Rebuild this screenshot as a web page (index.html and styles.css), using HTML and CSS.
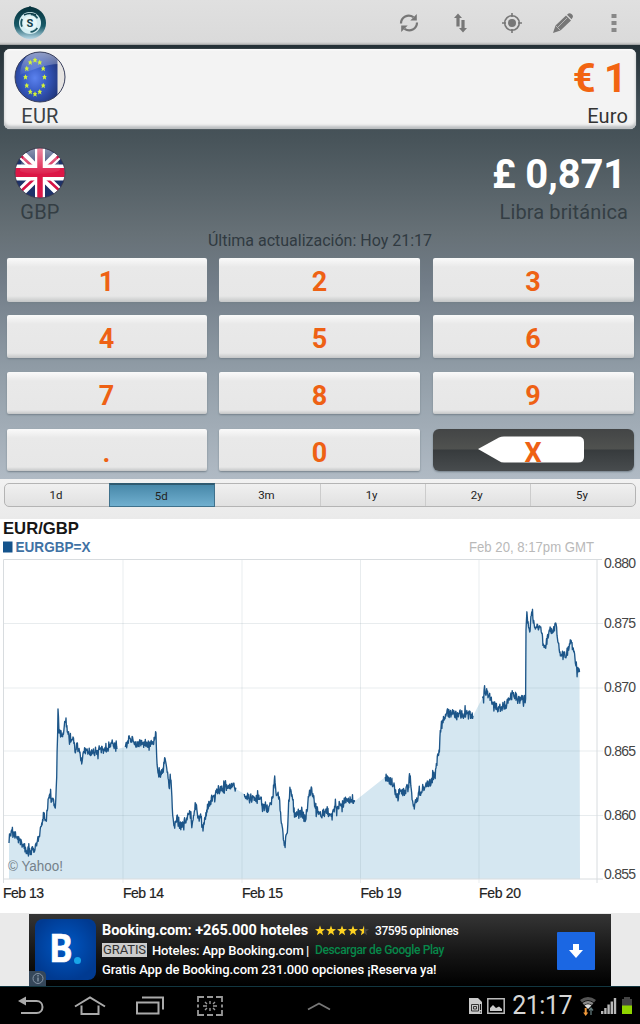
FILE: index.html
```html
<!DOCTYPE html>
<html lang="es">
<head>
<meta charset="utf-8">
<title>EUR/GBP</title>
<link rel="stylesheet" href="styles.css">
</head>
<body>
<header class="topbar">
  <svg class="logo" width="34" height="36" viewBox="0 0 34 36">
    <defs><linearGradient id="ring" x1="0" y1="0" x2="0" y2="1"><stop offset="0" stop-color="#06323c"/><stop offset=".6" stop-color="#185a68"/><stop offset="1" stop-color="#b8d8e6"/></linearGradient></defs>
    <circle cx="17" cy="18" r="16" fill="url(#ring)"/>
    <path d="M14 3l3-2 3 2z" fill="#06323c"/>
    <circle cx="17" cy="18" r="11" fill="#d5eef2"/>
    <circle cx="17" cy="18" r="8.8" fill="none" stroke="#1c5561" stroke-width="1.800" stroke-dasharray="8 10.430" stroke-dashoffset="-5.200"/>
    <path d="M11 10q6-3 12 0" fill="none" stroke="#0d3e49" stroke-width="1.5"/>
    <circle cx="17" cy="18" r="7" fill="#e8f7f8"/>
    <text x="17" y="22" text-anchor="middle" class="logo-s">S</text>
  </svg>
  <nav class="actions">
    <svg width="24" height="24" viewBox="0 0 24 24" fill="none" stroke="#777" stroke-width="2.2"><path d="M4 12.500C4 6 11 2.500 16.500 6.200M20 11.500C20 18 13 21.500 7.500 17.800"/><path d="M19.800 3v6.500h-6.500zM4.200 21v-6.500h6.500z" fill="#777" stroke="none"/></svg>
    <svg width="24" height="24" viewBox="0 0 24 24" fill="#777"><path d="M10 2.500l4 4.500h-2.400v8.500H8.400V7H6zM15 21.500l-4-4.500h2.400V9h3.200v8H19z"/></svg>
    <svg width="24" height="24" viewBox="0 0 24 24" fill="none" stroke="#777" stroke-width="1.600"><circle cx="12" cy="12" r="7.300"/><circle cx="12" cy="12" r="4" fill="#777" stroke="none"/><path d="M12 2v4M12 18v4M2 12h4M18 12h4"/></svg>
    <svg width="24" height="24" viewBox="0 0 24 24" fill="#777"><path d="M2 22l2.500-7.500L15 4.500l5 5L9.500 19.500z"/><path d="M16 3.800l1.500-1.300q1.500-.8 3 .5l1 1q1 1.300 0 2.800L20.500 8.300z"/><path d="M7 16l9-9M4.500 14.500l5 5" stroke="#ddd" stroke-width=".6"/></svg>
    <svg width="24" height="24" viewBox="0 0 24 24" fill="#888"><path d="M9.500 3h5v4h-5zM9.500 10h5v4h-5zM9.500 17h5v4h-5z"/></svg>
  </nav>
</header>

<main class="converter">
  <section class="currency card">
    <div class="side">
      <svg class="flag" width="52" height="52" viewBox="0 0 52 52">
        <defs>
          <radialGradient id="blue" cx=".48" cy=".52" r=".58"><stop offset="0" stop-color="#5b82ee"/><stop offset=".5" stop-color="#3558c0"/><stop offset="1" stop-color="#22387f"/></radialGradient>
          <linearGradient id="gloss" x1="0" y1="0" x2="0" y2="1"><stop offset="0" stop-color="#fff" stop-opacity=".5"/><stop offset="1" stop-color="#fff" stop-opacity=".04"/></linearGradient>
          <clipPath id="disc"><circle cx="26" cy="26" r="25"/></clipPath>
        </defs>
        <g clip-path="url(#disc)">
          <path d="M0 0h52v52H0z" fill="#e6e4e2"/><path d="M0 0h43.500v52H0z" fill="url(#blue)"/>
          <path d="M6 24C7 8 14 1 26 1s17 4 19 12C32 13 20 18 6 24z" fill="url(#gloss)"/>
          <g id="stars" fill="#d2f23a"></g>
        </g>
        <circle cx="26" cy="26" r="25" fill="none" stroke="#383f5d" stroke-width="1"/>
      </svg>
      <span class="code">EUR</span>
    </div>
    <div class="value"><strong class="amount orange">€ 1</strong><span class="name">Euro</span></div>
  </section>
  <section class="currency plain">
    <div class="side">
      <svg class="flag" width="52" height="52" viewBox="0 0 52 52">
        <g clip-path="url(#disc)">
          <path d="M0 0h52v52H0z" fill="#1e3268"/>
          <path d="M5 5l42 42M47 5L5 47" stroke="#fff" stroke-width="9"/>
          <path d="M5 7l14 13M47 7L33 20M20 32L5 46M33 32l14 13" stroke="#d31245" stroke-width="2.500"/>
          <path d="M26 0v52" stroke="#fff" stroke-width="10"/><path d="M0 25.500h52" stroke="#fff" stroke-width="16"/>
          <path d="M26 0v52" stroke="#dc1746" stroke-width="5.500"/>
          <path d="M0 25.500h52" stroke="#dc1746" stroke-width="9"/>
          <path d="M6 24C7 8 14 1 26 1s19 8 20 22C38 28 14 28 6 24z" fill="url(#gloss)"/>
        </g>
        <circle cx="26" cy="26" r="25" fill="none" stroke="#3b3949" stroke-width=".8"/>
      </svg>
      <span class="code">GBP</span>
    </div>
    <div class="value"><strong class="amount">£ 0,871</strong><span class="name">Libra británica</span></div>
  </section>
  <p class="updated">Última actualización: Hoy 21:17</p>
  <div class="keypad">
    <button class="key">1</button><button class="key">2</button><button class="key">3</button>
    <button class="key">4</button><button class="key">5</button><button class="key">6</button>
    <button class="key">7</button><button class="key">8</button><button class="key">9</button>
    <button class="key">.</button><button class="key">0</button>
    <button class="key delete"><svg class="back" width="108" height="28" viewBox="0 0 108 28"><path d="M1 13L22 1.500Q24 .5 27 .5H101Q107 .5 107 6V21Q107 26.500 101 26.500H27Q24 26.500 22 25z" fill="#fff"/></svg><span class="x">X</span></button>
  </div>
</main>

<div class="ranges">
  <div class="tabs"><span class="tab">1d</span><span class="tab active">5d</span><span class="tab">3m</span><span class="tab">1y</span><span class="tab">2y</span><span class="tab">5y</span></div>
</div>

<svg class="chart" width="640" height="394" viewBox="0 519 640 394">
  <text x="3" y="534" class="title" textLength="76" lengthAdjust="spacingAndGlyphs">EUR/GBP</text>
  <path d="M3 541.500h9.500v11H3z" fill="#14538c"/>
  <text x="15.500" y="552" class="series" textLength="75" lengthAdjust="spacingAndGlyphs">EURGBP=X</text>
  <text x="469" y="552" class="stamp" textLength="125" lengthAdjust="spacingAndGlyphs">Feb 20, 8:17pm GMT</text>
  <path id="area" fill="#d5e7f1"/>
  <path class="grid" d="M3 623.500h600M3 688h600M3 751h600M3 815.500h600M123 560v323M242 560v323M360.500 560v323M479 560v323"/>
  <path class="frame" d="M3.500 883V559.500H602M597 560v323M3 879h600"/>
  <path id="line" class="line"/>
  <text x="8" y="871" class="credit" textLength="55" lengthAdjust="spacingAndGlyphs">© Yahoo!</text>
  <g class="axis">
    <text x="604" y="568" textLength="32">0.880</text><text x="604" y="628" textLength="32">0.875</text><text x="604" y="692" textLength="32">0.870</text><text x="604" y="756" textLength="32">0.865</text><text x="604" y="820" textLength="32">0.860</text><text x="604" y="879" textLength="32">0.855</text>
  </g>
  <g class="days">
    <text x="3" y="898" textLength="41">Feb 13</text><text x="123" y="898" textLength="41">Feb 14</text><text x="242" y="898" textLength="41">Feb 15</text><text x="360.500" y="898" textLength="41">Feb 19</text><text x="479" y="898" textLength="42">Feb 20</text>
  </g>
</svg>

<div class="ad-strip">
  <section class="ad">
    <div class="ad-logo">
      <span class="b">B</span><i class="dot"></i>
      <svg class="info" width="17" height="15" viewBox="0 0 17 15"><path d="M0 0h12q5 0 5 5v10H0z" fill="#35475a"/><circle cx="9" cy="7.500" r="5" fill="none" stroke="#8695a6"/><path d="M9 6.500v4M9 4v1.500" stroke="#8695a6" stroke-width="1.400"/></svg>
    </div>
    <div class="ad-copy">
      <div class="row"><b class="headline">Booking.com: +265.000 hoteles</b>
        <svg class="rating" width="56" height="12" viewBox="0 0 56 12"><defs><path id="star" d="M5 .5l1.300 3.600 3.700.1-2.900 2.300 1 3.700L5 8.100l-3.100 2.100 1-3.700L0 4.200l3.700-.1z"/><clipPath id="half"><path d="M0 0h5v12H0z"/></clipPath></defs><g fill="#ffd321"><use href="#star"/><use href="#star" x="11"/><use href="#star" x="22"/><use href="#star" x="33"/></g><use href="#star" x="44" fill="#4b4b45"/><g transform="translate(44)"><use href="#star" clip-path="url(#half)" fill="#ffd321"/></g></svg>
        <span class="reviews">37595 opiniones</span></div>
      <div class="row"><span class="free">GRATIS</span><span class="app">Hoteles: App Booking.com</span><span class="bar">|</span><span class="store">Descargar de Google Play</span></div>
      <div class="row last">Gratis App de Booking.com 231.000 opciones ¡Reserva ya!</div>
    </div>
    <div class="download"><svg width="14" height="14" viewBox="0 0 14 14"><path d="M4 0h6v6h4l-7 8-7-8h4z" fill="#fff"/></svg></div>
  </section>
</div>

<footer class="system">
  <div class="soft">
    <svg width="26" height="20" viewBox="0 0 26 20" fill="none" stroke="#aaa" stroke-width="2"><path d="M5 5h13.500c8 0 8 12 0 12H3"/><path d="M0 5l8-4.500v9z" fill="#aaa" stroke="none"/></svg>
    <svg width="32" height="20" viewBox="0 0 32 20" fill="none" stroke="#aaa" stroke-width="2"><path d="M1 10.500L16 1.500l15 9M7.500 9.500V18h17V9.500"/></svg>
    <svg width="28" height="20" viewBox="0 0 28 20" fill="none" stroke="#aaa" stroke-width="2"><path d="M1 6.500h21.500v11H1zM6 1.500h21v12"/></svg>
    <svg width="26" height="20" viewBox="0 0 26 20" fill="none" stroke="#999" stroke-width="1.800"><path d="M7 1H1v5M10 1h6M19 1h6v5M1 8.500v3M25 8.500v3M1 14v5h6M10 19h6M19 19h6v-5"/><path d="M13 5v3M13 12v3M6 10h4M16 10h4M8 6l2 2M18 6l-2 2M8 14l2-2M18 14l-2-2" stroke-width="1.400"/></svg>
    <svg class="caret" width="26" height="12" viewBox="0 0 26 12" fill="none" stroke="#777" stroke-width="1.800"><path d="M2 9.500l11-6 11 6"/></svg>
  </div>
  <div class="status">
    <svg width="14" height="16" viewBox="0 0 14 16"><path d="M0 0h9l4 4v12H0z" fill="#c9c9c9"/><path d="M2.500 6.500h7v6.500h-7zM4.500 8.500h3v2.500h-3z" fill="none" stroke="#333"/><path d="M11.500 6v6M11.500 13.500v1" stroke="#111" stroke-width="1.200"/></svg>
    <svg width="18" height="16" viewBox="0 0 18 16"><path d="M.8.800h16.400v14.400H.8z" fill="none" stroke="#bbb" stroke-width="1.500"/><path d="M3 13v-3l3-3 3 3 3-1.500 3 2.500v2z" fill="#ccc"/></svg>
    <span class="clock">21:17</span>
    <svg class="wifi" width="18" height="20" viewBox="0 0 18 20"><path d="M1 4q8-6 16 0l-2 2.500Q9 2 3 6.500z" fill="#555"/><path d="M3.500 7q5.500-4 11 0l-1.500 2Q9 6 5 9z" fill="#888"/><path d="M5.500 9.500q3.500-2.500 7 0L9 13z" fill="#ddd"/><path d="M5.700 12h2v4.500h1.500L6.700 20 4.200 16.500h1.500z" fill="#f39a3a"/><path d="M12 19v-6M10 14.500l2-2.500 2 2.500" fill="none" stroke="#607779" stroke-width="1.300"/></svg>
    <svg width="16" height="17" viewBox="0 0 16 17" fill="#b8b8b8"><path d="M0 14h2.400v3H0zM3.200 11h2.400v6H3.200zM6.400 7.500h2.400V17H6.400zM9.600 4.500H12V17H9.600zM12.800 1h2.400v16h-2.400z"/></svg>
    <svg width="12" height="17" viewBox="0 0 12 17"><path d="M3 0h6v2h2v15H1V2h2z" fill="#444"/><path d="M1 8.500h10V17H1z" fill="#8fd400"/></svg>
  </div>
</footer>
<script src="chart.js"></script>
</body>
</html>
```

FILE: styles.css
```css
* { box-sizing: border-box; }
body { margin: 0; width: 640px; height: 1024px; overflow: hidden; background: #eee; font-family: Roboto, "Noto Sans", sans-serif; color: #333; display: flex; flex-direction: column; }
svg { display: block; flex: none; }

.topbar { height: 45px; flex: none; display: flex; align-items: center; justify-content: space-between; padding: 0 14px 0 13px; background: linear-gradient(#e0e0e0, #dadada 42px, #bdbdbd 44px, #8e9293 45px); }
.logo-s { font: bold 11px Roboto, sans-serif; fill: #123e48; }
.actions { display: flex; gap: 27.200px; }

.converter { height: 434px; flex: none; display: flex; flex-direction: column; background: linear-gradient(#253137 0, #3d4a51 55px, #48545a 95px, #677177 190px, #717c87 235px, #929ea8 330px, #b0bac4 434px); }
.currency { display: flex; justify-content: space-between; flex: none; }
.card { height: 80px; margin: 4px 4px 0; padding: 2px 8px 0 9px; border-radius: 6px; background: #f3f3f3; box-shadow: inset 0 -3px 3px #b9bcbe, inset 0 1px 2px #fff, 0 0 1px #c5cacd; }
.plain { height: 98px; padding: 18px 12px 0 13px; }
.side { display: flex; flex-direction: column; align-items: center; width: 54px; }
.code, .name { font-size: 20px; line-height: 24px; }
.code { margin-top: 1px; color: #3b4145; letter-spacing: .2px; }
.plain .code, .plain .name { color: #343e44; }
.value { display: flex; flex-direction: column; align-items: flex-end; }
.amount { font-size: 40px; line-height: 48px; height: 53px; padding: 4px 2px 0 0; color: #fff; letter-spacing: -.2px; }
.orange { color: #f26411; letter-spacing: -.9px; }
.name { letter-spacing: .12px; }
.updated { margin: 0; height: 31px; flex: none; text-align: center; font-size: 16px; line-height: 28px; color: #303a41; }

.keypad { display: grid; grid-template-columns: 200px 201px 201px; grid-auto-rows: 44px; column-gap: 12.500px; row-gap: 13px; padding: 0 6px 0 6.500px; }
.key { position: relative; height: 44px; border: 0; padding: 3px 0 0; font: 700 27px/40px Roboto, sans-serif; color: #ee6114; border-radius: 2px; background: linear-gradient(#fafafa, #e9e9e9 9px, #e7e7e7 38px, #c4c6c7); box-shadow: 0 1px 2px #74808a; }
.key:nth-child(n+4) { height: 43px; padding-top: 4px; }
.key:nth-child(n+7) { height: 42px; padding-top: 4px; }
.key.delete { border-radius: 6px; background: linear-gradient(#434546, #505250 20px, #373b3d 21px, #484c4e); }
.back { position: absolute; left: 44px; top: 7px; }
.x { position: relative; }

.ranges { height: 40px; flex: none; padding: 4px 4px 0; background: linear-gradient(#f2f2f2, #eaeaea); }
.tabs { display: flex; height: 24px; border: 1px solid #b4b4b4; border-radius: 5px; background: linear-gradient(#f0f0f0, #e1e1e1); }
.tab { flex: 1; text-align: center; font-size: 11.500px; line-height: 23px; color: #222; padding-right: 2px; }
.tab + .tab { border-left: 1px solid #ccc; }
.tab.active { margin: -1px 0; line-height: 22px; border: 1px solid #3f718c; border-top: 2px solid #2f5a70; background: linear-gradient(#4888a9, #70afcf); }
.tab.active + .tab { border-left: 0; }

.chart { background: #fff; font-family: "Liberation Sans", Arial, sans-serif; }
.title { font-size: 16.500px; font-weight: 700; fill: #161616; }
.series { font-size: 14.500px; font-weight: 700; fill: #3f72a4; }
.stamp { font-size: 14.500px; fill: #b9b9b9; }
.grid { fill: none; stroke: #78909c; stroke-opacity: .17; }
.frame { fill: none; stroke: #d8dcdf; }
.line { fill: none; stroke: #1d5689; stroke-width: 1.350; stroke-linejoin: round; }
.credit { font-size: 14px; fill: #74818a; }
.axis { font-size: 14px; fill: #444; }
.days { font-size: 14px; fill: #222; stroke: #222; stroke-width: .2; }

.ad-strip { height: 73px; flex: none; padding: 1px 29px 0; background: #eaeaea; }
.ad { height: 72px; display: flex; background: linear-gradient(#353535, #151515 40px, #000); color: #fff; }
.ad-logo { position: relative; width: 61px; height: 61px; margin: 5px 0 0 6px; border-radius: 8px; background: radial-gradient(circle at 50% 45%, #0058c4, #003a91 75%); display: flex; padding: 7px 0 0 15px; }
.b { font: 700 39px/46px Roboto, sans-serif; width: 23px; transform: scaleX(.9); transform-origin: left; -webkit-text-stroke: .7px #fff; }
.dot { width: 7px; height: 7px; margin: 31px 0 0 1px; border-radius: 50%; background: #18a5e8; }
.info { position: absolute; left: -6px; bottom: -6px; }
.ad-copy { padding: 7px 0 0 6px; width: 420px; white-space: nowrap; }
.row { display: flex; align-items: center; height: 19.500px; font-size: 13px; font-weight: 500; letter-spacing: -.1px; }
.headline { width: 206px; font-size: 14.500px; font-weight: 700; letter-spacing: -.05px; }
.rating { margin: 0 4px 0 7px; }
.reviews { font-size: 12px; letter-spacing: -.42px; }
.free { background: #ccc; color: #333; font-size: 13px; line-height: 14px; width: 45px; text-align: center; font-weight: 400; }
.app { margin-left: 5px; width: 151px; letter-spacing: -.12px; }
.bar { width: 12px; padding-left: 3px; }
.store { color: #07884a; font-size: 12px; letter-spacing: -.37px; }
.last { letter-spacing: -.09px; }
.download { width: 38px; height: 38px; margin: 18px 0 0 41px; background: #1b67e3; display: flex; align-items: center; justify-content: center; border-radius: 1px; }

.system { height: 38px; flex: none; border-top: 1px solid #123640; background: #000; display: flex; justify-content: space-between; padding: 0 7px 0 18px; }
.soft { display: flex; align-items: center; }
.soft svg { margin-right: 30px; }
.soft svg:nth-child(4) { margin: 0 83px 0 3px; }
.soft .caret { margin-right: 0; }
.status { display: flex; align-items: center; gap: 4px; }
.status svg:nth-child(-n+2) { position: relative; left: 4px; }
.clock { font-size: 25px; color: #d6d6d6; margin: 0 3px 0 7px; letter-spacing: -.5px; }
```

FILE: chart.js
```javascript
// Trading sessions as x,y pairs in chart coordinates.
const sessions = [
  [9,843,10,834,12,832,16.700,837,21.700,843,26.700,851,33,850,37,843,41.700,823,44.300,813,46,820,49,797,52.700,799,55.300,808,56.700,777,58,709,59,733,63,733,66,718,67.300,732,71.700,740,73.500,738,75,752,77,745,80,752,81.700,764,83.300,752,93,752,106.700,748,113,743,117,749],
  [125.300,747,130,738,135,743,147,743,152,742,154.500,740,156,733,156.700,757,158,773,162.500,773,165,758,166.700,768,169,787,171,780,172.300,808,174.300,826,177.300,815,180,827,186.700,818,190,813,192.700,821,196,804,198.300,816,201,818,203,831,206.700,810,213,797,218,792,223,790,232.700,785,236,789],
  [244.300,794,250,800,258,797,265,806,268,809,272.700,798,274.700,776,276,793,279.300,797,281,820,283,833,284.700,845,287.300,833,288.700,800,290.300,791,292.700,800,295,817,300,812,303,816,306,819,308.700,797,311.700,788,315,807,320.700,816,326,809,330,814,335,807,341.700,804,348,799,355,801],
  [385.300,777,389,781,394,783,396,796,400,790,404,793,408.300,788,410.300,776,411.700,793,414.300,809,416.700,798,421,792,426,783,431,784,436,768,439,750,440.700,732,442.700,720,446.700,713,453,714,463,714,473,716],
  [482.300,698,485,692,489.300,695,491.700,703,497.300,708,506.700,705,513,693,517.300,699,525.600,699,526,630,527.300,617,529.700,632,531.700,612,533.300,623,538,628,540,627,543.300,644,545.300,648,549.300,630,553.300,632,555.700,623,558.300,643,561.300,656,566.700,653,570.700,643,573.300,648,576.700,668,579.500,672]
];
let seed = 71;
const noise = () => { seed = (seed * 16807) % 2147483647; return seed / 2147483647 - 0.5; };
const strokes = [];
const outline = [];
for (const s of sessions) {
  const points = [];
  for (let i = 0; i < s.length - 2; i += 2) {
    const dx = s[i + 2] - s[i], dy = s[i + 3] - s[i + 1];
    const count = Math.max(1, Math.round(dx / 0.42));
    for (let k = 0; k < count; k++) {
      const t = k / count, swing = k ? noise() * (noise() > 0.36 ? 19 : 9) : 0;
      points.push((s[i] + dx * t).toFixed(1) + ' ' + (s[i + 1] + dy * t + swing).toFixed(1));
    }
  }
  points.push(s[s.length - 2] + ' ' + s[s.length - 1]);
  strokes.push('M' + points.join('L'));
  outline.push(...points);
}
document.getElementById('line').setAttribute('d', strokes.join(''));
document.getElementById('area').setAttribute('d', 'M9 879L' + outline.join('L') + 'L580 879Z');

const ns = 'http://www.w3.org/2000/svg';
for (let i = 0; i < 12; i++) {
  const a = i * Math.PI / 6;
  const star = document.createElementNS(ns, 'path');
  star.setAttribute('d', 'M0-2.800L.8-.9 2.300-.8 1.200.6 1.700 2.800 0 1.500-1.700 2.800-1.200.6-2.300-.8-.8-.9z');
  star.setAttribute('transform', `translate(${21 + 9.500 * Math.sin(a)} ${26 - 17 * Math.cos(a)})`);
  document.getElementById('stars').append(star);
}
```
